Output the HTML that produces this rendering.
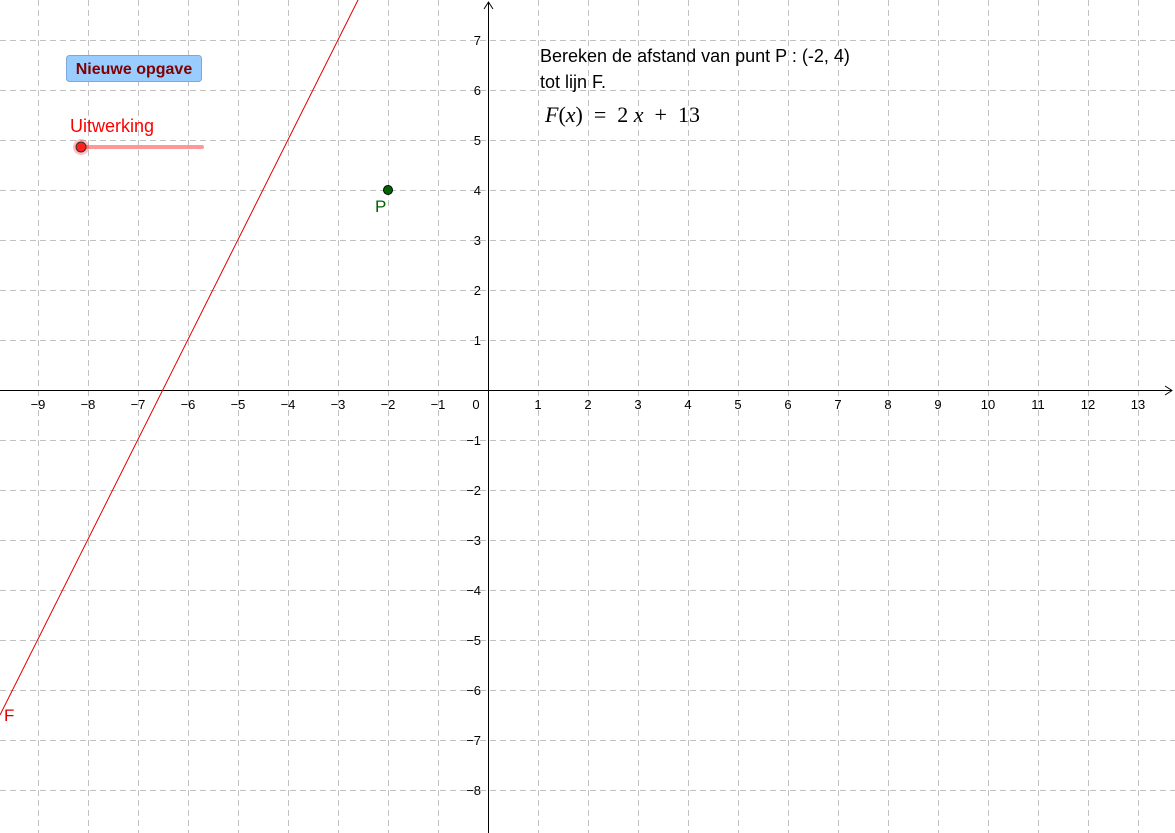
<!DOCTYPE html>
<html><head><meta charset="utf-8"><style>
body{margin:0;background:#fff;overflow:hidden}
svg{display:block;font-family:"Liberation Sans",sans-serif}
</style></head><body>
<svg width="1175" height="833" xmlns="http://www.w3.org/2000/svg">
<g stroke="#c0c0c0" stroke-width="1" stroke-dasharray="6,4">
<line x1="38.5" y1="0" x2="38.5" y2="833"/><line x1="88.5" y1="0" x2="88.5" y2="833"/><line x1="138.5" y1="0" x2="138.5" y2="833"/><line x1="188.5" y1="0" x2="188.5" y2="833"/><line x1="238.5" y1="0" x2="238.5" y2="833"/><line x1="288.5" y1="0" x2="288.5" y2="833"/><line x1="338.5" y1="0" x2="338.5" y2="833"/><line x1="388.5" y1="0" x2="388.5" y2="833"/><line x1="438.5" y1="0" x2="438.5" y2="833"/><line x1="538.5" y1="0" x2="538.5" y2="833"/><line x1="588.5" y1="0" x2="588.5" y2="833"/><line x1="638.5" y1="0" x2="638.5" y2="833"/><line x1="688.5" y1="0" x2="688.5" y2="833"/><line x1="738.5" y1="0" x2="738.5" y2="833"/><line x1="788.5" y1="0" x2="788.5" y2="833"/><line x1="838.5" y1="0" x2="838.5" y2="833"/><line x1="888.5" y1="0" x2="888.5" y2="833"/><line x1="938.5" y1="0" x2="938.5" y2="833"/><line x1="988.5" y1="0" x2="988.5" y2="833"/><line x1="1038.5" y1="0" x2="1038.5" y2="833"/><line x1="1088.5" y1="0" x2="1088.5" y2="833"/><line x1="1138.5" y1="0" x2="1138.5" y2="833"/>
<line x1="0" y1="40.5" x2="1175" y2="40.5"/><line x1="0" y1="90.5" x2="1175" y2="90.5"/><line x1="0" y1="140.5" x2="1175" y2="140.5"/><line x1="0" y1="190.5" x2="1175" y2="190.5"/><line x1="0" y1="240.5" x2="1175" y2="240.5"/><line x1="0" y1="290.5" x2="1175" y2="290.5"/><line x1="0" y1="340.5" x2="1175" y2="340.5"/><line x1="0" y1="440.5" x2="1175" y2="440.5"/><line x1="0" y1="490.5" x2="1175" y2="490.5"/><line x1="0" y1="540.5" x2="1175" y2="540.5"/><line x1="0" y1="590.5" x2="1175" y2="590.5"/><line x1="0" y1="640.5" x2="1175" y2="640.5"/><line x1="0" y1="690.5" x2="1175" y2="690.5"/><line x1="0" y1="740.5" x2="1175" y2="740.5"/><line x1="0" y1="790.5" x2="1175" y2="790.5"/>
</g>
<g stroke="#000" stroke-width="1" fill="none">
<line x1="0" y1="390.5" x2="1172" y2="390.5"/><polyline points="1165,386 1172,390.5 1165,395"/>
<line x1="488.5" y1="2" x2="488.5" y2="833"/><polyline points="484,9 488.5,2 493,9"/>
</g>
<g font-size="13" fill="#000" text-anchor="middle">
<text x="38" y="409">−9</text><text x="88" y="409">−8</text><text x="138" y="409">−7</text><text x="188" y="409">−6</text><text x="238" y="409">−5</text><text x="288" y="409">−4</text><text x="338" y="409">−3</text><text x="388" y="409">−2</text><text x="438" y="409">−1</text><text x="476" y="409">0</text>
<text x="538" y="409">1</text><text x="588" y="409">2</text><text x="638" y="409">3</text><text x="688" y="409">4</text><text x="738" y="409">5</text><text x="788" y="409">6</text><text x="838" y="409">7</text><text x="888" y="409">8</text><text x="938" y="409">9</text><text x="988" y="409">10</text><text x="1038" y="409">11</text><text x="1088" y="409">12</text><text x="1138" y="409">13</text>
</g>
<g font-size="13" fill="#000" text-anchor="end">
<text x="481" y="45">7</text><text x="481" y="95">6</text><text x="481" y="145">5</text><text x="481" y="195">4</text><text x="481" y="245">3</text><text x="481" y="295">2</text><text x="481" y="345">1</text>
<text x="481" y="445">−1</text><text x="481" y="495">−2</text><text x="481" y="545">−3</text><text x="481" y="595">−4</text><text x="481" y="645">−5</text><text x="481" y="695">−6</text><text x="481" y="745">−7</text><text x="481" y="795">−8</text>
</g>
<line x1="0" y1="715" x2="358" y2="0" stroke="#e00000" stroke-width="1"/>
<text x="4" y="721" font-size="17" fill="#e00000">F</text>
<circle cx="388" cy="190" r="4.5" fill="#006400" stroke="#000" stroke-width="1"/>
<text x="375" y="212" font-size="17" fill="#006400">P</text>
<rect x="66.5" y="55.5" width="135" height="26" rx="3" fill="#99ccff" stroke="#7fa6d6"/>
<text x="134" y="74" font-size="16" font-weight="bold" fill="#800000" text-anchor="middle">Nieuwe opgave</text>
<text x="70" y="132" font-size="18" fill="#ff0000">Uitwerking</text>
<line x1="82" y1="147" x2="202" y2="147" stroke="#ff9999" stroke-width="4" stroke-linecap="round"/>
<circle cx="81" cy="147" r="8" fill="#ff0000" opacity="0.25"/>
<circle cx="81" cy="147" r="5" fill="#ff2020" stroke="#333" stroke-width="1"/>
<text x="540" y="62" font-size="18" fill="#000">Bereken de afstand van punt P : (-2, 4)</text>
<text x="540" y="88" font-size="18" fill="#000">tot lijn F.</text>
<text x="545" y="122" font-size="22" font-family="Liberation Serif,serif" fill="#000" xml:space="preserve"><tspan font-style="italic">F</tspan>(<tspan font-style="italic">x</tspan>)  =  2 <tspan font-style="italic">x</tspan>  +  13</text>
</svg>
</body></html>
